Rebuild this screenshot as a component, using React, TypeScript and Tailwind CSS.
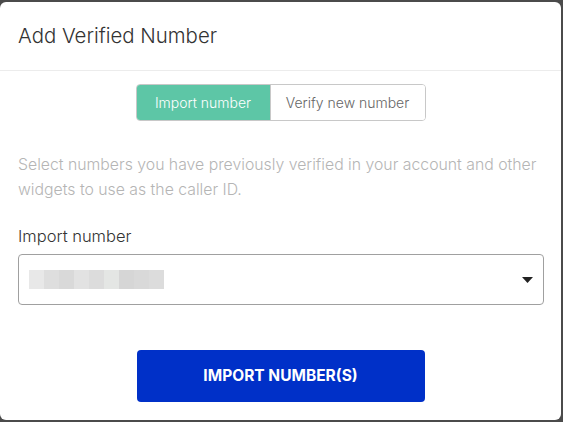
import { useState } from 'react';

const blurShades = ['bg-[#e8e8e8]', 'bg-[#dedede]', 'bg-[#d9d9d9]', 'bg-[#e2e2e2]', 'bg-[#dcdcdc]', 'bg-[#e4e6e4]', 'bg-[#d6d6d6]', 'bg-[#d9d9d9]', 'bg-[#dcdcdc]'];

export default function App() {
  const [tab, setTab] = useState<'import' | 'verify'>('import');

  return (
    <div className="w-[563px] h-[422px] bg-[#4b4b4b] pt-[2px] pr-[2px] pb-[2px] font-['Inter',sans-serif]">
      <div className="w-[561px] h-[418px] bg-white rounded-[6px] overflow-hidden">
        {/* Header */}
        <div className="h-[69px] border-b border-[#ececec] px-[18px] flex items-center">
          <h1 className="text-[20.4px] font-light text-[#333]">Add Verified Number</h1>
        </div>

        {/* Toggle */}
        <div className="flex justify-center mt-[13px]">
          <div className="flex h-[37px] w-[290px] border border-[#c8c8c8] rounded-[4px] overflow-hidden text-[14px] font-light">
            <button
              onClick={() => setTab('import')}
              className={`w-[133px] ${tab === 'import' ? 'bg-[#5dc6a6] text-white' : 'bg-white text-[#666]'}`}
            >
              Import number
            </button>
            <button
              onClick={() => setTab('verify')}
              className={`flex-1 border-l border-[#c8c8c8] ${tab === 'verify' ? 'bg-[#5dc6a6] text-white' : 'bg-white text-[#666]'}`}
            >
              Verify new number
            </button>
          </div>
        </div>

        <div className="px-[18px]">
          <p className="mt-[31px] text-[15.8px] leading-[25px] font-light text-[#b5b5b5]">
            Select numbers you have previously verified in your account and other widgets to use as the caller ID.
          </p>

          <label className="block mt-[24px] text-[16.5px] leading-[20px] font-light text-[#333]">Import number</label>

          {/* Select */}
          <div className="mt-[8px] h-[51px] w-[526px] border border-[#a0a0a0] rounded-[4px] flex items-center justify-between pl-[10px] pr-[10px]">
            <div className="flex h-[19px] blur-[0.6px]">
              {blurShades.map((c, i) => (
                <div key={i} className={`w-[15px] h-full ${c}`} />
              ))}
            </div>
            <svg width="11" height="6" viewBox="0 0 11 6">
              <path d="M0 0h11L5.5 6z" fill="#222" />
            </svg>
          </div>

          {/* Submit */}
          <div className="flex justify-center mt-[45px]">
            <button className="w-[288px] h-[52px] bg-[#0030c8] rounded-[4px] text-white text-[15.5px] font-bold">
              IMPORT NUMBER(S)
            </button>
          </div>
        </div>
      </div>
    </div>
  );
}
